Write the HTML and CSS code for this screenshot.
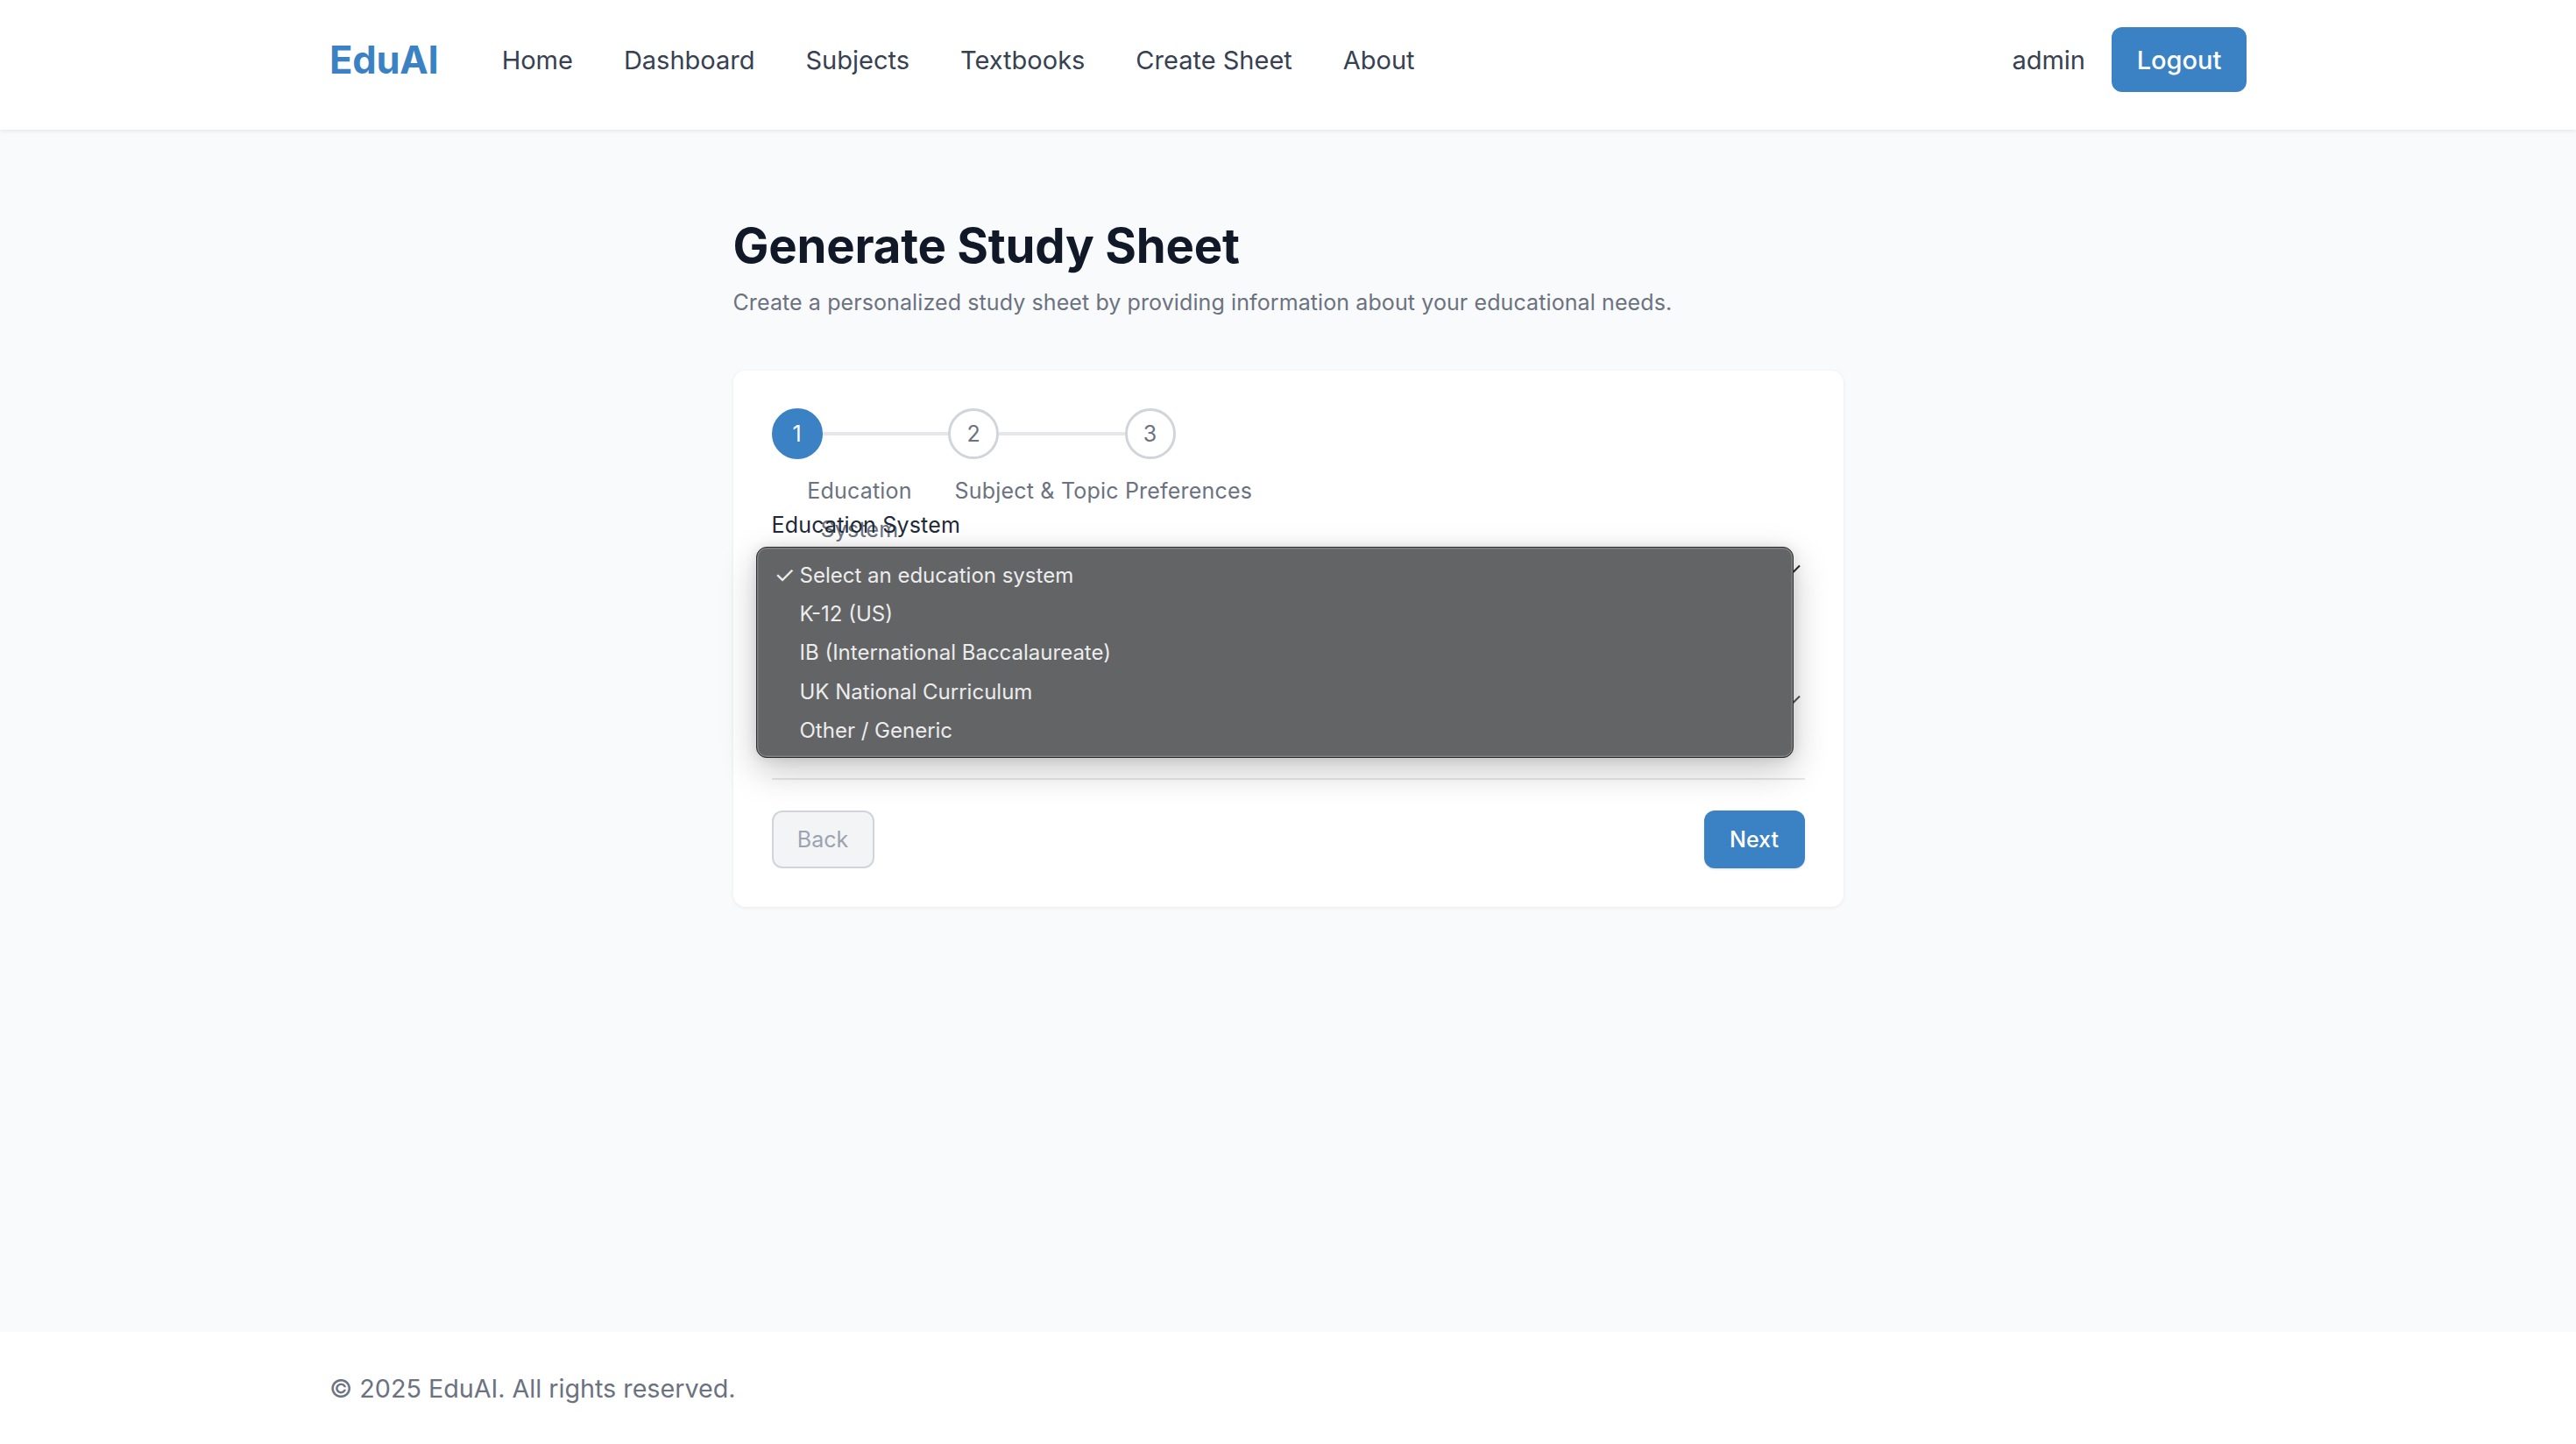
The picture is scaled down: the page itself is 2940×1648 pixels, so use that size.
FILE: index.html
```html
<!DOCTYPE html>
<html lang="en">
<head>
<meta charset="utf-8">
<title>EduAI - Generate Study Sheet</title>
<link rel="stylesheet" href="styles.css">
</head>
<body>
<header class="site-header">
  <div class="container header-inner">
    <a class="logo" href="#">EduAI</a>
    <nav class="main-nav">
      <a href="#">Home</a>
      <a href="#">Dashboard</a>
      <a href="#">Subjects</a>
      <a href="#">Textbooks</a>
      <a href="#">Create Sheet</a>
      <a href="#">About</a>
    </nav>
    <div class="user-area">
      <span class="username">admin</span>
      <button class="btn-logout">Logout</button>
    </div>
  </div>
</header>

<main class="page">
  <div class="page-inner">
    <h1 class="page-title">Generate Study Sheet</h1>
    <p class="page-subtitle">Create a personalized study sheet by providing information about your educational needs.</p>

    <section class="card">
      <div class="stepper">
        <div class="step-track">
          <div class="step-circle active">1</div>
          <div class="step-line"></div>
          <div class="step-circle">2</div>
          <div class="step-line"></div>
          <div class="step-circle">3</div>
        </div>
        <div class="step-labels">
          <span class="step-label step-label-first">Education System</span>
          <span class="step-label step-label-second">Subject &amp; Topic Preferences</span>
        </div>
      </div>

      <div class="field">
        <label class="field-label">Education System</label>
        <div class="select-box">
          <svg class="chev" width="16" height="10" viewBox="0 0 16 10"><path d="M1 1.5 L8 8.5 L15 1.5" fill="none" stroke="#2a2a2a" stroke-width="2"/></svg>
        </div>
      </div>

      <div class="field field-second">
        <label class="field-label">Grade Level</label>
        <div class="select-box">
          <svg class="chev" width="16" height="10" viewBox="0 0 16 10"><path d="M1 1.5 L8 8.5 L15 1.5" fill="none" stroke="#555" stroke-width="2"/></svg>
        </div>
      </div>

      <div class="form-actions">
        <button class="btn-back" disabled>Back</button>
        <button class="btn-next">Next</button>
      </div>

      <div class="select-popup">
        <div class="popup-option selected"><span class="check">✓</span>Select an education system</div>
        <div class="popup-option"><span class="check"></span>K-12 (US)</div>
        <div class="popup-option"><span class="check"></span>IB (International Baccalaureate)</div>
        <div class="popup-option"><span class="check"></span>UK National Curriculum</div>
        <div class="popup-option"><span class="check"></span>Other / Generic</div>
      </div>
    </section>
  </div>
</main>

<footer class="site-footer">
  <div class="container">
    <p class="copyright">© 2025 EduAI. All rights reserved.</p>
  </div>
</footer>
</body>
</html>
```

FILE: styles.css
```css
* { box-sizing: border-box; }

html, body { margin: 0; padding: 0; }

body {
  font-family: Inter, "Noto Sans", "Liberation Sans", sans-serif;
  background: #f9fafb;
  color: #111827;
  min-height: 100vh;
  display: flex;
  flex-direction: column;
}

.container {
  max-width: 2188px;
  margin: 0 auto;
  width: 100%;
}

/* Header */
.site-header {
  background: #ffffff;
  height: 148px;
  box-shadow: 0 2px 4px rgba(0, 0, 0, 0.07);
  position: relative;
  z-index: 2;
}

.header-inner {
  display: flex;
  align-items: center;
  padding-top: 31px;
  height: 105px;
}

.logo {
  font-size: 43.5px;
  font-weight: 700;
  color: #3b82c4;
  text-decoration: none;
  letter-spacing: -0.2px;
}

.main-nav {
  display: flex;
  align-items: center;
  gap: 58px;
  margin-left: 72px;
}

.main-nav a {
  font-size: 29px;
  color: #374151;
  text-decoration: none;
}

.user-area {
  margin-left: auto;
  display: flex;
  align-items: center;
  gap: 30px;
}

.username {
  font-size: 29px;
  color: #374151;
}

.btn-logout {
  font-family: inherit;
  font-size: 29px;
  font-weight: 500;
  color: #ffffff;
  background: #3b82c4;
  border: none;
  border-radius: 12px;
  width: 154px;
  height: 74px;
  padding: 0;
}

/* Main */
.page {
  flex: 1;
  padding-top: 100px;
}

.page-inner {
  width: 1267px;
  margin: 0 auto;
}

.page-title {
  font-size: 54.5px;
  line-height: 64px;
  font-weight: 700;
  color: #111827;
  margin: 0;
  letter-spacing: -0.2px;
}

.page-subtitle {
  font-size: 25px;
  line-height: 36px;
  color: #6b7280;
  letter-spacing: 0.1px;
  margin: 15px 0 0;
}

.card {
  position: relative;
  margin-top: 60px;
  background: #ffffff;
  border-radius: 14px;
  box-shadow: 0 1px 4px rgba(0, 0, 0, 0.07);
  padding: 43px 44px 44px;
}

/* Stepper */
.step-track {
  display: flex;
  align-items: center;
}

.step-circle {
  width: 58px;
  height: 58px;
  border-radius: 50%;
  border: 3px solid #d1d5db;
  background: #ffffff;
  color: #6b7280;
  font-size: 25px;
  display: flex;
  align-items: center;
  justify-content: center;
  flex: none;
}

.step-circle.active {
  background: #3b82c4;
  border-color: #3b82c4;
  color: #ffffff;
}

.step-line {
  width: 143.5px;
  height: 4px;
  background: #e5e7eb;
  flex: none;
}

.step-labels {
  display: flex;
  margin-top: 14px;
  height: 43px;
}

.step-label {
  font-size: 25px;
  line-height: 44px;
  letter-spacing: 0.2px;
  color: #6b7280;
}

.step-label-first {
  width: 201px;
  padding: 0 12px;
  text-align: center;
  flex: none;
}

.step-label-second {
  padding-left: 8px;
  white-space: nowrap;
}

/* Fields */
.field-label {
  display: block;
  font-size: 25px;
  line-height: 36px;
  letter-spacing: 0.2px;
  font-weight: 400;
  color: #1f2937;
}

.select-box {
  margin-top: 4px;
  height: 56px;
  display: flex;
  align-items: center;
  justify-content: flex-end;
  padding-right: 5px;
}

.field-second {
  margin-top: 53px;
}

.form-actions {
  margin-top: 62px;
  border-top: 2px solid #e5e7eb;
  padding-top: 35px;
  display: flex;
  justify-content: space-between;
  align-items: center;
}

.btn-back,
.btn-next {
  font-family: inherit;
  font-size: 25px;
  height: 66px;
  border-radius: 12px;
  padding: 0;
}

.btn-back {
  width: 117px;
  background: #f3f4f6;
  border: 2px solid #d1d5db;
  color: #9ca3af;
}

.btn-next {
  width: 115px;
  background: #3b82c4;
  border: none;
  color: #ffffff;
  font-weight: 500;
  box-shadow: 0 1px 3px rgba(0, 0, 0, 0.12);
}

/* Native select popup (open menu) */
.select-popup {
  position: absolute;
  left: 26px;
  top: 201px;
  width: 1184px;
  height: 241px;
  background: #636466;
  border: 1.5px solid #2c2c2e;
  border-radius: 12px;
  box-shadow: inset 0 0 0 1.5px #808183, 0 14px 40px rgba(0, 0, 0, 0.22), 0 0 14px rgba(0, 0, 0, 0.1);
  padding: 9px 0;
  z-index: 5;
}

.popup-option {
  display: flex;
  align-items: center;
  height: 44.4px;
  font-size: 24px;
  color: #ececec;
  padding-left: 20px;
}

.check {
  display: inline-block;
  width: 29px;
  font-size: 27px;
}

/* Footer */
.site-footer {
  background: #ffffff;
  padding: 45px 0 43px;
}

.copyright {
  margin: 0;
  font-size: 28.7px;
  line-height: 40px;
  color: #6b7280;
}
```
